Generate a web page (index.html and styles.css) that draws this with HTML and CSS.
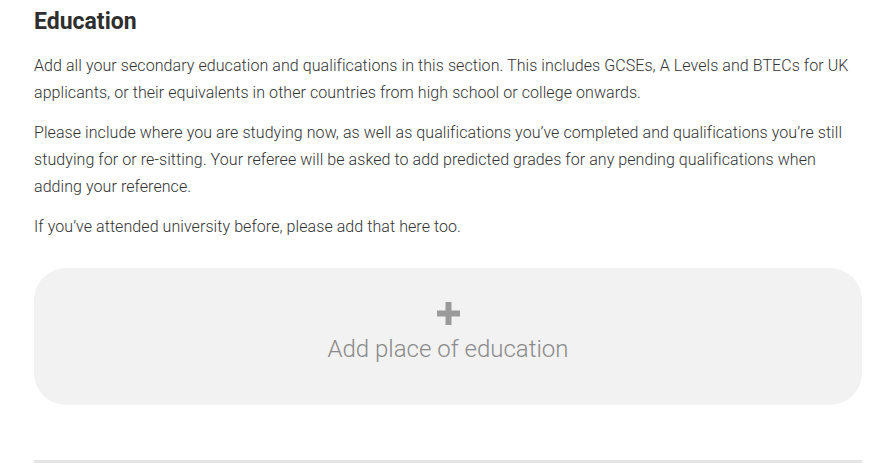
FILE: index.html
```html
<!DOCTYPE html>
<html>
<head>
<meta charset="utf-8">
<link rel="stylesheet" href="styles.css">
</head>
<body>
<main class="section">
  <h2 class="title">Education</h2>
  <p class="text">Add all your secondary education and qualifications in this section. This includes GCSEs, A Levels and BTECs for UK applicants, or their equivalents in other countries from high school or college onwards.</p>
  <p class="text">Please include where you are studying now, as well as qualifications you’ve completed and qualifications you’re still studying for or re-sitting. Your referee will be asked to add predicted grades for any pending qualifications when adding your reference.</p>
  <p class="text">If you’ve attended university before, please add that here too.</p>
  <button class="add-card" type="button">
    <svg class="plus" width="23" height="23" viewBox="0 0 23 23"><path d="M8.5 0h6v8.5H23v6h-8.5V23h-6v-8.5H0v-6h8.5z" fill="#9a9a9a"/></svg>
    <span class="add-label">Add place of education</span>
  </button>
  <hr class="divider">
</main>
</body>
</html>
```
FILE: styles.css
```css
html, body {
  margin: 0;
  padding: 0;
  background: #fff;
}
body {
  font-family: Roboto, "Noto Sans", sans-serif;
  color: #3a3a3a;
}
.section {
  width: 828px;
  margin-left: 34px;
  padding-top: 8px;
}
.title {
  margin: 0 0 16px;
  font-size: 23px;
  font-weight: 700;
  line-height: 28px;
  color: #2e2e2e;
}
.text {
  max-width: 820px;
  margin: 0 0 13px;
  font-size: 16px;
  font-weight: 300;
  letter-spacing: 0.07px;
  line-height: 27px;
  color: #333;
}
.add-card {
  display: flex;
  flex-direction: column;
  align-items: center;
  justify-content: flex-start;
  width: 100%;
  height: 137px;
  margin-top: 28px;
  border: none;
  border-radius: 32px;
  background: #f2f2f2;
  font-family: inherit;
  cursor: pointer;
  padding: 34px 0 0;
}
.plus {
  display: block;
  margin-bottom: 9px;
}
.add-label {
  font-size: 24px;
  font-weight: 300;
  color: #8a8a8a;
  line-height: 30px;
}
.divider {
  margin: 55px 0 0;
  border: none;
  height: 3px;
  background: #e5e5e5;
}
```
